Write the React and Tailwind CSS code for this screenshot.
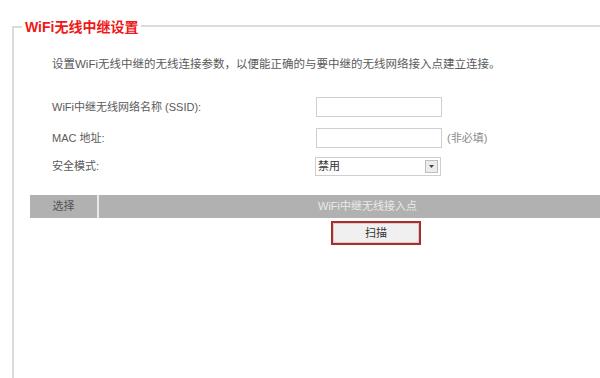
import React from 'react';

export default function App() {
  return (
    <div className="w-[600px] h-[378px] bg-white overflow-hidden text-[11px] text-[#5a5a5a]" style={{ fontFamily: '"Liberation Sans", "Noto Sans CJK SC", sans-serif' }}>
      <div className="ml-[12px] mt-[17px] flex flex-col">
        {/* legend row */}
        <div className="flex items-center h-[18px]">
          <div className="w-[10px] self-end h-[9px] border-t-2 border-l-2 border-[#dcdcdc]" />
          <span className="px-[3px] text-[14px] font-bold text-[#f01818] leading-[18px] mt-[2px]">WiFi无线中继设置</span>
          <div className="flex-1 h-[2px] bg-[#dcdcdc]" />
        </div>

        <div className="border-l-2 border-[#dcdcdc] h-[343px]">
          <p className="ml-[38px] mt-[22px] leading-[14px] text-[11.5px]">设置WiFi无线中继的无线连接参数，以便能正确的与要中继的无线网络接入点建立连接。</p>

          <div className="mt-[26px] ml-[38px] flex flex-col">
            <div className="flex items-center h-[20px]">
              <span className="w-[264px]">WiFi中继无线网络名称 (SSID):</span>
              <input className="w-[126px] h-[20px] border border-[#cfcfcf] bg-white" />
            </div>
            <div className="flex items-center h-[20px] mt-[11px]">
              <span className="w-[264px]">MAC 地址:</span>
              <input className="w-[126px] h-[20px] border border-[#cfcfcf] bg-white" />
              <span className="ml-[5px] text-[#8a8a8a]">(非必填)</span>
            </div>
            <div className="flex items-center h-[19px] mt-[9px]">
              <span className="w-[263px]">安全模式:</span>
              <div className="w-[126px] h-[19px] border border-[#cfcfcf] flex items-center justify-between pl-[2px] pr-[2px]">
                <span className="text-[#333]">禁用</span>
                <span className="w-[13px] h-[13px] border border-[#bdbdbd] bg-[#ececec] flex items-center justify-center">
                  <svg width="5" height="3" viewBox="0 0 5 3"><path d="M0 0h5L2.5 3z" fill="#444" /></svg>
                </span>
              </div>
            </div>
          </div>

          <div className="mt-[19px] ml-[16px] flex h-[23px] bg-[#b1b1b1] text-[#eaeaea]">
            <div className="w-[69px] flex items-center justify-center text-[#555] border-r-2 border-[#e8e8e8]">选择</div>
            <div className="flex-1 flex items-center justify-center pl-[36px]">WiFi中继无线接入点</div>
          </div>

          <div className="flex ml-[317px] mt-[3px]">
            <button className="w-[90px] h-[24px] border-2 border-[#b02a2a] bg-[#f0f0f0] text-[#333] text-[11px] shadow-[inset_0_0_0_1px_#d0d0d0]">扫描</button>
          </div>
        </div>
      </div>
    </div>
  );
}
